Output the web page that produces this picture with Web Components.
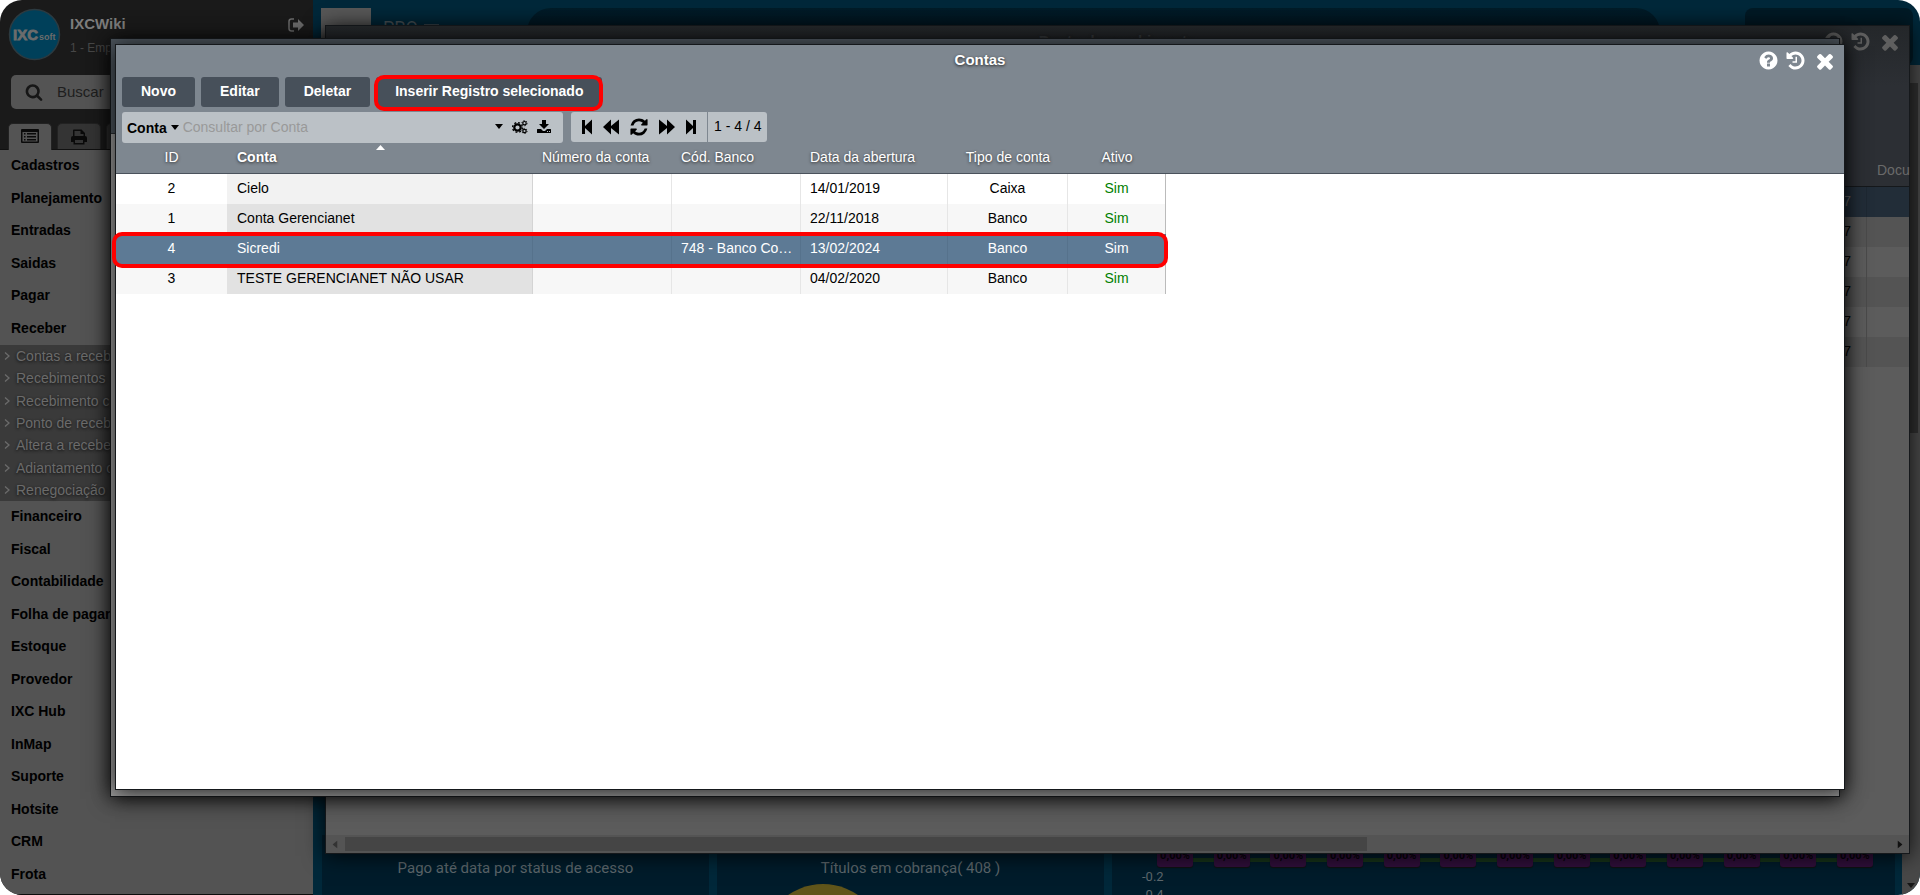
<!DOCTYPE html>
<html lang="pt-BR">
<head>
<meta charset="utf-8">
<title>IXCWiki - Contas</title>
<style>
html, body { margin: 0; height: 100%; background: #fff; }
body { font: 14px/20px "Liberation Sans", Arial, sans-serif; }
</style>
</head>
<body>
<ixc-app></ixc-app>
<script>
const define = (name, html, setup) => {
  const tpl = document.createElement('template');
  tpl.innerHTML = html;
  customElements.define(name, class extends HTMLElement {
    constructor() {
      super();
      this.attachShadow({ mode: 'open' }).append(tpl.content.cloneNode(true));
    }
    connectedCallback() { if (setup) setup(this, this.shadowRoot); }
  });
};

const FA = (d) => ['0 0 1792 1792', `<path d="${d}"/>`];
const ICONS = {
  close: FA('M1490 1322q0 40-28 68l-136 136q-28 28-68 28t-68-28l-294-294-294 294q-28 28-68 28t-68-28l-136-136q-28-28-28-68t28-68l294-294-294-294q-28-28-28-68t28-68l136-136q28-28 68-28t68 28l294 294 294-294q28-28 68-28t68 28l136 136q28 28 28 68t-28 68l-294 294 294 294q28 28 28 68z'),
  search: FA('M1216 832q0-185-131.5-316.5t-316.5-131.5-316.5 131.5-131.5 316.5 131.5 316.5 316.5 131.5 316.5-131.5 131.5-316.5zm512 832q0 52-38 90t-90 38q-54 0-90-38l-343-342q-179 124-399 124-143 0-273.5-55.5t-225-150-150-225-55.5-273.5 55.5-273.5 150-225 225-150 273.5-55.5 273.5 55.5 225 150 150 225 55.5 273.5q0 220-124 399l343 343q37 37 37 90z'),
  help: FA('M1024 1376v-192q0-14-9-23t-23-9h-192q-14 0-23 9t-9 23v192q0 14 9 23t23 9h192q14 0 23-9t9-23zm256-672q0-88-55.5-163t-138.5-116-170-41q-243 0-371 213-15 24 8 42l132 100q7 6 19 6 16 0 25-12 53-68 86-92 34-24 86-24 48 0 85.5 26t37.5 59q0 38-20 61t-68 45q-63 28-115.5 86.5t-52.5 125.5v36q0 14 9 23t23 9h192q14 0 23-9t9-23q0-19 21.5-49.5t54.5-49.5q32-18 49-28.5t46-35 44.5-48 28-60.5 12.5-81zm384 192q0 209-103 385.5t-279.5 279.5-385.5 103-385.5-103-279.5-279.5-103-385.5 103-385.5 279.5-279.5 385.5-103 385.5 103 279.5 279.5 103 385.5z'),
  history: FA('M1664 896q0 156-61 298t-164 245-245 164-298 61q-172 0-327-72.5t-264-204.5q-7-10-6.5-22.5t8.5-20.5l137-138q10-9 25-9 16 2 23 12 73 95 179 147t225 52q104 0 198.5-40.5t163.5-109.5 109.5-163.5 40.5-198.5-40.5-198.5-109.5-163.5-163.5-109.5-198.5-40.5q-98 0-188 35.5t-160 101.5l137 138q31 30 14 69-17 40-59 40h-448q-26 0-45-19t-19-45v-448q0-42 40-59 39-17 69 14l130 129q107-101 244.5-156.5t284.5-55.5q156 0 298 61t245 164 164 245 61 298zm-640-288v448q0 14-9 23t-23 9h-320q-14 0-23-9t-9-23v-64q0-14 9-23t23-9h224v-352q0-14 9-23t23-9h64q14 0 23 9t9 23z'),
  refresh: FA('M1639 1056q0 5-1 7-64 268-268 434.5t-478 166.5q-146 0-282.5-55t-243.5-157l-129 129q-19 19-45 19t-45-19-19-45v-448q0-26 19-45t45-19h448q26 0 45 19t19 45-19 45l-137 137q71 66 161 102t187 36q134 0 250-65t186-179q11-17 53-117 8-23 30-23h192q13 0 22.5 9.5t9.5 22.5zm25-800v448q0 26-19 45t-45 19h-448q-26 0-45-19t-19-45 19-45l138-138q-148-137-349-137-134 0-250 65t-186 179q-11 17-53 117-8 23-30 23h-199q-13 0-22.5-9.5t-9.5-22.5v-7q65-268 270-434.5t480-166.5q146 0 284 55.5t245 156.5l130-129q19-19 45-19t45 19 19 45z'),
  caret: ['0 0 8 5', '<path d="M0 0h8L4 5z"/>'],
  up: ['0 0 9 5', '<path d="M0 5h9L4.500 0z"/>'],
  first: ['0 0 12 16', '<path d="M1 1h3v6l7-6.500v15L4 9v6H1z"/>'],
  prev: ['0 0 16 16', '<path d="M8 .5V7l8-6.500v15L8 9v6.500L0 8z"/>'],
  next: ['0 0 16 16', '<path d="M8 .5V7L0 .5v15L8 9v6.500L16 8z"/>'],
  last: ['0 0 12 16', '<path d="M11 1H8v6L1 .5v15L8 9v6h3z"/>'],
  download: ['0 0 14 14', '<path d="M5 0h4v4h3L7 9 2 4h3z"/><path d="M.5 9h3.500l2 2h2l2-2h3.500q.5 0 .5.500V12.500q0 .5-.5.500H.5q-.5 0-.5-.5V9.500Q0 9 .5 9zm9.500 2v1h1v-1zm2 0v1h1v-1z" fill-rule="evenodd"/>'],
  cogs: ['0 0 16 14', '<g fill="none" stroke="currentColor"><circle cx="5.500" cy="7.500" r="3.200" stroke-width="2.200"/><circle cx="5.500" cy="7.500" r="4.900" stroke-width="1.400" stroke-dasharray="1.900 1.950"/><circle cx="12.500" cy="3.200" r="1.700" stroke-width="1.200"/><circle cx="12.500" cy="3.200" r="2.600" stroke-width=".9" stroke-dasharray="1.300 1.400"/><circle cx="12.500" cy="11" r="1.700" stroke-width="1.200"/><circle cx="12.500" cy="11" r="2.600" stroke-width=".9" stroke-dasharray="1.300 1.400"/></g>'],
  logout: ['0 0 16 14', '<path d="M6 1H3.500Q1 1 1 3.500v7Q1 13 3.500 13H6" fill="none" stroke="currentColor" stroke-width="1.500"/><path d="M5 4.500h5V1l6 6-6 6V9.500H5z"/>'],
  list: ['0 0 18 14', '<path d="M1 0h16q1 0 1 1v12q0 1-1 1H1q-1 0-1-1V1q0-1 1-1zm.5 3v9.500h15V3z" fill-rule="evenodd"/><path d="M3 4h1.500v1.500H3zM6 4h9v1.500H6zM3 7h1.500v1.500H3zM6 7h9v1.500H6zM3 10h1.500v1.500H3zM6 10h9v1.500H6z"/>'],
  print: ['0 0 16 16', '<path d="M2 7V1.500Q2 .5 3 .5h7.500L14 4v3q2 0 2 2v4h-2.500v2.500h-11V13H0V9q0-2 2-2zm1.500 0h9V5H9.500V2h-6zM4 11v3h8v-3z" fill-rule="evenodd"/>'],
  chevron: ['0 0 6 8', '<path d="M1 .5 5 4 1 7.500" fill="none" stroke="currentColor" stroke-width="1.300"/>'],
};

define('ixc-icon', `<style>
:host { display: block; flex: none; }
svg { display: block; width: 100%; height: 100%; fill: currentColor; }
</style><svg aria-hidden="true"></svg>`, (el, root) => {
  const [box, body] = ICONS[el.getAttribute('name')];
  const svg = root.querySelector('svg');
  svg.setAttribute('viewBox', box);
  svg.innerHTML = body;
  el.style.width = el.getAttribute('w') + 'px';
  el.style.height = (el.getAttribute('h') || el.getAttribute('w')) + 'px';
});

define('ixc-sidebar', `<style>
:host { display: flex; flex-direction: column; background: #1a1a1a; color: #000; border-bottom: 1px solid #0c0c0c; box-sizing: border-box; overflow: hidden; }
header { display: flex; gap: 9px; padding: 8px 9px 0 8px; height: 66px; box-sizing: border-box; }
.logo { width: 53px; height: 53px; flex: none; }
.who { flex: 1; padding-top: 6px; }
h1 { margin: 0; font-size: 15px; line-height: 20px; color: #7c7c7c; }
.who p { margin: 4px 0 0; font-size: 12px; line-height: 20px; color: #474747; }
button { border: 0; background: none; padding: 0; color: #6a6a6a; font: inherit; }
header button { align-self: flex-start; padding-top: 10px; }
label { display: flex; align-items: center; gap: 14px; margin: 9px 11px 0; height: 34px; padding-left: 14px; background: #545454; border-radius: 5px; color: #161616; }
input { border: 0; background: none; font: 15px/20px "Liberation Sans", sans-serif; padding: 0 0 1px; width: 180px; outline: 0; }
input::placeholder { color: #1e1e1e; opacity: 1; }
.tabs { display: flex; gap: 5px; padding: 14px 8px 0; height: 41px; box-sizing: border-box; border-bottom: 1px solid #111; }
.tabs button { width: 44px; height: 26px; border-radius: 5px 5px 0 0; background: #343434; color: #0a0a0a; display: grid; place-items: center; border: 1px solid #222; border-bottom: 0; box-sizing: border-box; }
.tabs .on { background: #545454; height: 28px; padding-bottom: 4px; }
nav { flex: 1; background: #535353; }
ul { margin: 0; padding: 0; list-style: none; display: grid; grid-auto-rows: 1fr; }
li { display: flex; align-items: center; padding-bottom: 2px; }
a { color: inherit; text-decoration: none; white-space: nowrap; }
.six { height: 195px; } .twelve { height: 390px; }
.main li { padding-left: 11px; font-weight: bold; }
.sub { height: 156px; background: #3a3a3a; color: #6b6b6b; text-shadow: 0 1px 3px #111; }
.sub li { gap: 6px; padding: 0 0 0 4px; }
</style>
<header>
  <svg class="logo" viewBox="0 0 53 53" role="img" aria-label="IXC soft"><circle cx="26.500" cy="26.500" r="25" fill="#00405a" stroke="#2c3a40" stroke-width="1.500"/>
  <text x="5" y="32" font-family="Liberation Sans" font-weight="bold" font-size="15" fill="#6c6c6c" stroke="#6c6c6c" stroke-width=".8">IXC</text><text x="31" y="32" font-family="Liberation Sans" font-weight="bold" font-size="9" fill="#6c6c6c">soft</text></svg>
  <div class="who"><h1>IXCWiki</h1><p>1 - Emp</p></div>
  <button aria-label="Sair"><ixc-icon name="logout" w="16" h="14"></ixc-icon></button>
</header>
<label><ixc-icon name="search" w="18"></ixc-icon><input aria-label="Buscar" placeholder="Buscar"></label>
<div class="tabs"><button class="on" aria-label="Menu"><ixc-icon name="list" w="18" h="14"></ixc-icon></button><button aria-label="Imprimir"><ixc-icon name="print" w="16"></ixc-icon></button><button aria-label="Outros"></button></div>
<nav></nav>`, (el, root) => {
  const link = (t, sub) => `<li>${sub ? '<ixc-icon name="chevron" w="6" h="8"></ixc-icon>' : ''}<a href="#">${t}</a></li>`;
  const list = (cls, items, sub) => `<ul class="${cls}">${items.map(t => link(t, sub)).join('')}</ul>`;
  root.querySelector('nav').innerHTML =
    list('main six', ['Cadastros', 'Planejamento', 'Entradas', 'Saidas', 'Pagar', 'Receber']) +
    list('sub', ['Contas a receb', 'Recebimentos', 'Recebimento c', 'Ponto de receb', 'Altera a recebe', 'Adiantamento c', 'Renegociação'], true) +
    list('main twelve', ['Financeiro', 'Fiscal', 'Contabilidade', 'Folha de pagar', 'Estoque', 'Provedor', 'IXC Hub', 'InMap', 'Suporte', 'Hotsite', 'CRM', 'Frota']);
});

define('ixc-dashboard', `<style>
:host { display: grid; grid-template-columns: 1fr 18px; grid-template-rows: 65px 1fr; background: #00283a; font-family: Roboto, sans-serif; color: #5d676c; overflow: hidden; }
header { grid-column: 1 / 3; display: flex; padding: 8px 7px 0 8px; }
.box { width: 50px; background: #585858; }
.brand { display: flex; gap: 6px; padding: 9px 0 0 12px; width: 144px; font-size: 18px; line-height: 22px; color: #4a5459; }
.brand::after { content: ""; width: 15px; height: 1px; margin-top: 7px; background: #3b474d; }
.bar { flex: 1; background: linear-gradient(#001c29, #001219); border-radius: 24px; margin-right: 85px; }
.user { width: 168px; background: #001a26; border-radius: 8px; }
main { display: grid; grid-template-columns: 387fr 387fr 783fr; gap: 8px; padding: 0 7px 0 9px; align-items: end; }
section { background: #001c2b; height: 60px; overflow: hidden; font-size: 15px; line-height: 20px; text-align: center; }
h2 { font: inherit; margin: 23px 0 0; }
.pie { display: block; width: 122px; height: 122px; margin: 6px 0 0 45px; border-radius: 50%; background: #60551a; }
.plot { display: flex; justify-content: space-between; margin: 14px 22px 0 45px; height: 18px; background: linear-gradient(#17351a, #17351a) 0 9px / 100% 4px no-repeat; }
.plot span { width: 36px; height: 18px; border-radius: 3px; background: #310f3b; color: #06020a; font: bold 11px/14px Roboto, sans-serif; box-shadow: 0 1px 1px #111; }
.axis { font-size: 13px; line-height: 18px; text-align: left; margin: 1px 0 0 30px; }
.scroll { background: #484848; display: flex; flex-direction: column; align-items: center; justify-content: space-between; color: #161616; }
.thumb { width: 14px; height: 350px; background: #303030; margin-top: 18px; }
.scroll ixc-icon { margin-bottom: 7px; }
</style>
<header><div class="box"></div><div class="brand">PRO</div><div class="bar"></div><div class="user"></div></header>
<main>
  <section><h2>Pago até data por status de acesso</h2></section>
  <section><h2>Títulos em cobrança( 408 )</h2><i class="pie"></i></section>
  <section><div class="plot"></div><div class="axis">-0.2<br>-0.4</div></section>
</main>
<div class="scroll"><div class="thumb"></div><ixc-icon name="caret" w="8" h="5"></ixc-icon></div>`, (el, root) => {
  root.querySelector('.plot').innerHTML = '<span>0,00%</span>'.repeat(13);
});

define('ixc-window', `<style>
:host { display: flex; flex-direction: column; box-sizing: border-box; border: 1px solid #15181b; background: var(--body, #fff); box-shadow: 0 2px 20px rgba(0,0,0,.8); }
.head { background: var(--head, #7e8790); border-bottom: 1px solid var(--rule, #4a525c); color: var(--ink, #fff); }
.title { display: grid; grid-template-columns: 1fr auto 1fr; height: 32px; }
h2 { grid-column: 2; margin: 0; padding-top: 5px; font-size: 15px; line-height: 20px; color: var(--caption, #fff); text-shadow: 0 1px 3px #222; }
.tools { display: flex; justify-content: flex-end; align-items: center; gap: 6px; padding: 0 7px 1px 0; }
button { border: 0; background: none; padding: 0; color: inherit; }
.tools button:last-child { margin-left: 1px; }
</style>
<div class="head">
  <div class="title"><h2></h2><div class="tools"><button aria-label="Ajuda"><ixc-icon name="help" w="21"></ixc-icon></button><button aria-label="Histórico"><ixc-icon name="history" w="21"></ixc-icon></button><button aria-label="Fechar"><ixc-icon name="close" w="24"></ixc-icon></button></div></div>
  <slot name="bar"></slot>
</div>
<slot></slot>`, (el, root) => {
  root.querySelector('h2').textContent = el.getAttribute('heading');
  if (!el.hasAttribute('heading')) root.querySelector('.title').style.visibility = 'hidden';
});

define('ixc-toolbar', `<style>
:host { display: flex; flex-direction: column; gap: 5px; padding: 0 6px; color: #000; }
.row { display: flex; gap: 6px; }
button { border: 0; background: none; padding: 0; font: inherit; color: inherit; }
.row.actions button { height: 30px; padding: 0 19px 2px; border-radius: 3px; background: #47505a; color: #fff; font-weight: bold; line-height: 28px; }
.actions .hot { position: relative; }
.hot::after { content: ""; position: absolute; inset: -2px -1px -4px -2px; border: 4px solid #f00; border-radius: 10px; }
.find { display: flex; align-items: center; width: 436px; height: 31px; padding-left: 5px; border-radius: 3px; background: #bbc1c6; margin-right: 2px; }
.field { display: flex; align-items: center; gap: 4px; font-weight: bold; }
input { flex: 1; min-width: 0; border: 0; background: none; padding: 0 0 2px 4px; font: 14px/20px "Liberation Sans", sans-serif; outline: 0; }
input::placeholder { color: #999; opacity: 1; }
.opts { display: flex; align-items: center; gap: 9px; padding: 0 12px 2px 0; }
.pager { display: flex; height: 30px; border-radius: 3px; background: #bbc1c6; }
.nav { display: flex; align-items: center; gap: 10px; padding: 0 10px; }
.count { border-left: 1px solid #7e8790; padding: 0 6px; line-height: 28px; }
</style>
<div class="row actions"><button>Novo</button><button>Editar</button><button>Deletar</button><button class="hot">Inserir Registro selecionado</button></div>
<div class="row">
  <div class="find"><button class="field">Conta <ixc-icon name="caret" w="8" h="5"></ixc-icon></button><input aria-label="Consultar por Conta" placeholder="Consultar por Conta">
    <div class="opts"><button aria-label="Opções"><ixc-icon name="caret" w="8" h="5"></ixc-icon></button><button aria-label="Configurar"><ixc-icon name="cogs" w="16" h="14"></ixc-icon></button><button aria-label="Exportar"><ixc-icon name="download" w="14"></ixc-icon></button></div></div>
  <div class="pager"><div class="nav">
    <button aria-label="Primeira"><ixc-icon name="first" w="12" h="16"></ixc-icon></button><button aria-label="Anterior"><ixc-icon name="prev" w="16"></ixc-icon></button><button aria-label="Atualizar"><ixc-icon name="refresh" w="20"></ixc-icon></button><button aria-label="Próxima"><ixc-icon name="next" w="16"></ixc-icon></button><button aria-label="Última"><ixc-icon name="last" w="12" h="16"></ixc-icon></button></div>
    <span class="count">1 - 4 / 4</span></div>
</div>`);

define('ixc-accounts', `<style>
:host { display: block; flex: 1; }
table { border-collapse: separate; border-spacing: 0; table-layout: fixed; width: 1050px; margin-top: -31px; }
th, td { height: 30px; padding: 0 4px 2px 9px; box-sizing: border-box; text-align: left; font-weight: normal; white-space: nowrap; line-height: 20px; }
th { color: #fff; text-shadow: 0 1px 3px #333; position: relative; height: 31px; padding-bottom: 3px; }
th ixc-icon { position: absolute; top: 2px; left: calc(50% - 4px); }
.c { text-align: center; padding-left: 4px; }
td { border-right: 1px solid #e6e6e6; }
td:first-child { border-right: 0; }
td:last-child { border-right-color: #bbb; }
.key { font-weight: bold; }
td.name { background: #f2f2f2; border-right-color: #d4d4d4; padding-left: 10px; }
th.key { padding-left: 10px; }
tr:nth-child(even) td { background: #f7f7f7; }
tr:nth-child(even) td.name { background: #e2e2e2; }
td.yes { color: #008000; }
tbody tr { position: relative; }
tr.sel { z-index: 1; }
tr.sel td, tr.sel td.name { background: #5d7a95; color: #fff; border-right-color: #56728c; }
tr.sel::after { content: ""; position: absolute; inset: -2px -2px -4px -4px; border: 4px solid #f00; border-radius: 10px; }
</style>
<table>
<colgroup><col style="width:111px"><col style="width:306px"><col style="width:139px"><col style="width:129px"><col style="width:147px"><col style="width:120px"><col style="width:98px"></colgroup>
<thead><tr><th class="c">ID</th><th class="key">Conta<ixc-icon name="up" w="9" h="5"></ixc-icon></th><th>Número da conta</th><th>Cód. Banco</th><th>Data da abertura</th><th class="c">Tipo de conta</th><th class="c">Ativo</th></tr></thead>
<tbody></tbody></table>`, (el, root) => {
  const rows = [
    ['2', 'Cielo', '', '', '14/01/2019', 'Caixa', 'Sim'],
    ['1', 'Conta Gerencianet', '', '', '22/11/2018', 'Banco', 'Sim'],
    ['4', 'Sicredi', '', '748 - Banco Co…', '13/02/2024', 'Banco', 'Sim'],
    ['3', 'TESTE GERENCIANET NÃO USAR', '', '', '04/02/2020', 'Banco', 'Sim'],
  ];
  const cls = ['c', 'name', '', '', '', 'c', 'c yes'];
  root.querySelector('tbody').innerHTML = rows.map(r =>
    `<tr${r[0] === '4' ? ' class="sel"' : ''}>${r.map((v, i) => `<td class="${cls[i]}">${v}</td>`).join('')}</tr>`).join('');
});

define('ixc-receipts', `<style>
:host { display: flex; flex: 1; flex-direction: column; justify-content: space-between; min-height: 0; }
table { border-collapse: separate; border-spacing: 0; width: 100%; margin-top: -31px; table-layout: fixed; }
th, td { height: 30px; padding: 0 0 2px; box-sizing: border-box; text-align: right; font-weight: normal; }
th { color: #6a6a6a; height: 31px; text-align: left; padding: 0 0 3px 10px; }
td:first-child { border-right: 1px solid #4a4a4a; padding-right: 15px; }
tr:nth-child(even) td { background: #545454; }
tr:first-child td { background: #222d38; color: #666; border-color: #1e2832; }
.scroll { display: flex; align-items: center; gap: 6px; height: 18px; background: #545454; padding: 0 5px; color: #333; }
.thumb { flex: none; width: 65%; height: 14px; background: #454545; }
.l { transform: rotate(90deg); } .r { transform: rotate(-90deg); margin-left: auto; color: #111; }
</style>
<table><colgroup><col><col style="width:42px"></colgroup><thead><tr><th></th><th>Docu</th></tr></thead><tbody></tbody></table>
<div class="scroll"><ixc-icon class="l" name="caret" w="8" h="5"></ixc-icon><div class="thumb"></div><ixc-icon class="r" name="caret" w="8" h="5"></ixc-icon></div>`, (el, root) => {
  root.querySelector('tbody').innerHTML = '<tr><td>7</td><td></td></tr>'.repeat(6);
});

define('ixc-app', `<style>
:host { display: grid; grid-template-columns: 313px 1fr; position: relative; height: 100vh; min-height: 600px; border-radius: 22px; overflow: hidden; }
ixc-window { position: absolute; }
.back { inset: 25px 10px 41px 325px; --head: linear-gradient(#24272a, #2c2f34 60px); --rule: #15181b; --ink: #5f5f5f; --caption: #3c3f42; --body: #5c5c5c; }
.mid { inset: 38px 80px 98px 110px; --head: #4c545c; --rule: #2a2e33; --body: #9a9a9a; }
.front { inset: 44px 75px 105px 115px; }
.gap { height: 128px; }
.gap.short { height: 62px; }
.cols { height: 30px; }
</style>
<ixc-sidebar></ixc-sidebar>
<ixc-dashboard></ixc-dashboard>
<ixc-window class="back" heading="Ponto de recebimento"><div slot="bar" class="gap"></div><ixc-receipts></ixc-receipts></ixc-window>
<ixc-window class="mid"><div slot="bar" class="gap short"></div></ixc-window>
<ixc-window class="front" heading="Contas"><div slot="bar"><ixc-toolbar></ixc-toolbar><div class="cols"></div></div><ixc-accounts></ixc-accounts></ixc-window>`);
</script>
</body>
</html>
